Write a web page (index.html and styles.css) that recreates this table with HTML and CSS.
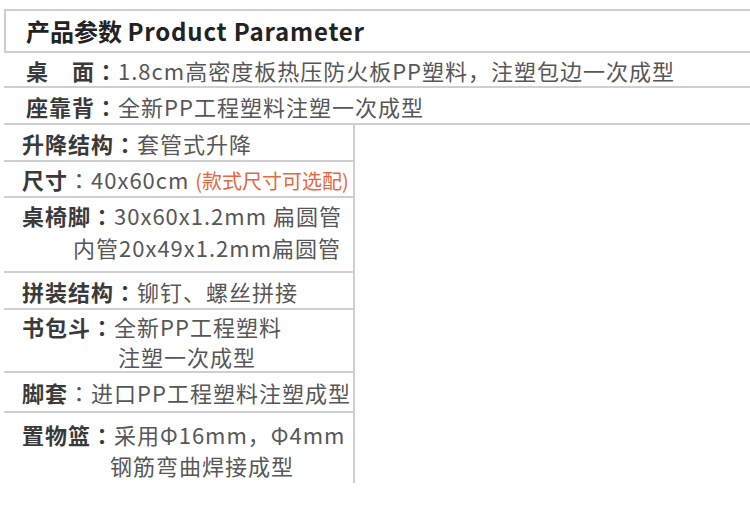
FILE: index.html
```html
<!DOCTYPE html>
<html lang="zh-CN">
<head>
<meta charset="utf-8">
<title>产品参数 Product Parameter</title>
<link rel="stylesheet" href="styles.css">
</head>
<body>
<div class="page">
  <div class="header">产品参数 <span class="en">Product Parameter</span></div>
  <div class="wide-row r1"><div class="line"><b>桌　面<span class="colon" lang="zh-TW">：</span></b>1.8cm高密度板热压防火板PP塑料，注塑包边一次成型</div></div>
  <div class="wide-row r2"><div class="line"><b>座靠背<span class="colon" lang="zh-TW">：</span></b>全新PP工程塑料注塑一次成型</div></div>
  <div class="specs">
    <div class="spec"><div class="line"><b>升降结构<span class="colon" lang="zh-TW">：</span></b>套管式升降</div></div>
    <div class="spec"><div class="line"><b>尺寸</b><span class="colon" lang="zh-TW">：</span>40x60cm <span class="note">(款式尺寸可选配)</span></div></div>
    <div class="spec multi s5"><div class="line"><b>桌椅脚<span class="colon" lang="zh-TW">：</span></b>30x60x1.2mm 扁圆管</div><div class="line ind-a">内管20x49x1.2mm扁圆管</div></div>
    <div class="spec"><div class="line"><b>拼装结构<span class="colon" lang="zh-TW">：</span></b>铆钉、螺丝拼接</div></div>
    <div class="spec multi s7"><div class="line"><b>书包斗<span class="colon" lang="zh-TW">：</span></b>全新PP工程塑料</div><div class="line ind-b">注塑一次成型</div></div>
    <div class="spec"><div class="line"><b>脚套</b><span class="colon" lang="zh-TW">：</span>进口PP工程塑料注塑成型</div></div>
    <div class="spec multi s9 last"><div class="line"><b>置物篮<span class="colon" lang="zh-TW">：</span></b>采用Φ16mm，Φ4mm</div><div class="line ind-c">钢筋弯曲焊接成型</div></div>
  </div>
</div>
</body>
</html>
```

FILE: styles.css
```css
html, body {
  margin: 0;
  padding: 0;
  background: #ffffff;
}

body {
  font-family: "Noto Sans CJK SC", "Noto Sans", sans-serif;
  color: #575757;
  width: 750px;
  height: 516px;
  overflow: hidden;
}

.page {
  padding-top: 9px;
  padding-left: 4px;
}

.header {
  box-sizing: border-box;
  height: 44px;
  border-top: 2px solid #cfcfcf;
  border-left: 2px solid #cfcfcf;
  border-bottom: 2px solid #cfcfcf;
  padding-left: 20px;
  font-size: 24px;
  font-weight: 700;
  color: #222222;
  line-height: 40px;
}

.header .en {
  letter-spacing: 0.8px;
}

.line {
  font-size: 22px;
  letter-spacing: 1px;
  white-space: nowrap;
}

.line b {
  font-weight: 700;
  color: #3a3a3a;
}

.colon {
  font-family: "Noto Sans CJK TC", "Noto Sans CJK SC", sans-serif;
}

.wide-row {
  box-sizing: border-box;
  border-bottom: 2px solid #cfcfcf;
  padding-left: 22px;
  display: flex;
  flex-direction: column;
  justify-content: center;
}

.r1 { height: 35px; }
.r2 { height: 37px; }

.specs {
  box-sizing: border-box;
  width: 351px;
  height: 358px;
  border-right: 2px solid #cfcfcf;
  display: grid;
  grid-template-rows: 37px 36px 75px 37px 63px 40px 70px;
}

.spec {
  box-sizing: border-box;
  border-bottom: 2px solid #cfcfcf;
  padding-left: 18px;
  display: flex;
  flex-direction: column;
  justify-content: center;
}

.spec.last {
  border-bottom: none;
}

.multi {
  justify-content: flex-start;
}

.s5 { padding-top: 1px; }
.s5 .line { line-height: 32px; }
.s7 { padding-top: 1px; }
.s7 .line { line-height: 30px; }
.s9 { padding-top: 6px; }
.s9 .line { line-height: 31px; }

.ind-a { padding-left: 51px; }
.ind-b { padding-left: 96px; }
.ind-c { padding-left: 88px; }

.note {
  color: #e4683f;
  font-size: 20px;
  letter-spacing: 0;
}
```
